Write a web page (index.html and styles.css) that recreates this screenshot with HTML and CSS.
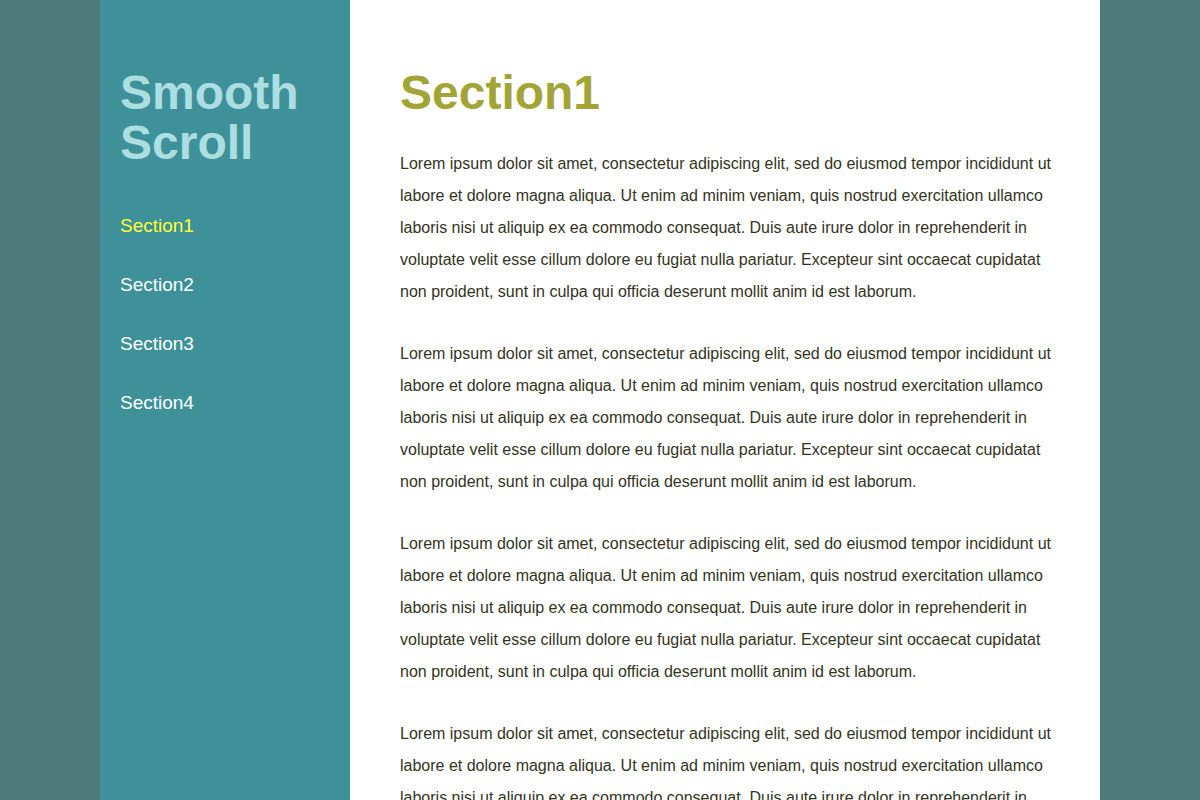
FILE: index.html
```html
<!DOCTYPE html>
<html lang="en">
<head>
<meta charset="utf-8">
<title>Smooth Scroll</title>
<link rel="stylesheet" href="styles.css">
</head>
<body>
<div class="wrap">
  <aside class="sidebar">
    <h1 class="logo">Smooth Scroll</h1>
    <nav class="nav">
      <a class="nav-link active" href="#section1">Section1</a>
      <a class="nav-link" href="#section2">Section2</a>
      <a class="nav-link" href="#section3">Section3</a>
      <a class="nav-link" href="#section4">Section4</a>
    </nav>
  </aside>
  <main class="content">
    <section id="section1">
      <h2 class="title">Section1</h2>
      <p>Lorem ipsum dolor sit amet, consectetur adipiscing elit, sed do eiusmod tempor incididunt ut labore et dolore magna aliqua. Ut enim ad minim veniam, quis nostrud exercitation ullamco laboris nisi ut aliquip ex ea commodo consequat. Duis aute irure dolor in reprehenderit in voluptate velit esse cillum dolore eu fugiat nulla pariatur. Excepteur sint occaecat cupidatat non proident, sunt in culpa qui officia deserunt mollit anim id est laborum.</p>
      <p>Lorem ipsum dolor sit amet, consectetur adipiscing elit, sed do eiusmod tempor incididunt ut labore et dolore magna aliqua. Ut enim ad minim veniam, quis nostrud exercitation ullamco laboris nisi ut aliquip ex ea commodo consequat. Duis aute irure dolor in reprehenderit in voluptate velit esse cillum dolore eu fugiat nulla pariatur. Excepteur sint occaecat cupidatat non proident, sunt in culpa qui officia deserunt mollit anim id est laborum.</p>
      <p>Lorem ipsum dolor sit amet, consectetur adipiscing elit, sed do eiusmod tempor incididunt ut labore et dolore magna aliqua. Ut enim ad minim veniam, quis nostrud exercitation ullamco laboris nisi ut aliquip ex ea commodo consequat. Duis aute irure dolor in reprehenderit in voluptate velit esse cillum dolore eu fugiat nulla pariatur. Excepteur sint occaecat cupidatat non proident, sunt in culpa qui officia deserunt mollit anim id est laborum.</p>
      <p>Lorem ipsum dolor sit amet, consectetur adipiscing elit, sed do eiusmod tempor incididunt ut labore et dolore magna aliqua. Ut enim ad minim veniam, quis nostrud exercitation ullamco laboris nisi ut aliquip ex ea commodo consequat. Duis aute irure dolor in reprehenderit in voluptate velit esse cillum dolore eu fugiat nulla pariatur. Excepteur sint occaecat cupidatat non proident, sunt in culpa qui officia deserunt mollit anim id est laborum.</p>
    </section>
  </main>
</div>
</body>
</html>
```
FILE: styles.css
```css
html, body {
  margin: 0;
  padding: 0;
}
body {
  background: #4f7a7a;
  font-family: "Liberation Sans", Arial, sans-serif;
  overflow: hidden;
}
.wrap {
  width: 1000px;
  margin: 0 auto;
  display: flex;
  min-height: 100vh;
}
.sidebar {
  width: 250px;
  flex: none;
  box-sizing: border-box;
  padding: 0 20px;
  background: #3e9199;
}
.logo {
  margin: 68px 0 0;
  font-size: 48px;
  line-height: 50px;
  font-weight: bold;
  color: #abdde1;
}
.nav {
  margin-top: 28px;
  display: flex;
  flex-direction: column;
}
.nav-link {
  display: block;
  font-size: 19px;
  line-height: 59px;
  color: #ffffff;
  text-decoration: none;
}
.nav-link.active {
  color: #ffff33;
}
.content {
  flex: 1;
  background: #ffffff;
  padding: 0 44px 0 50px;
}
.title {
  margin: 68px 0 30px;
  font-size: 48px;
  line-height: 50px;
  font-weight: bold;
  color: #a2a536;
}
.content p {
  margin: 0 0 30px;
  font-size: 16px;
  line-height: 32px;
  color: #333322;
}
```
